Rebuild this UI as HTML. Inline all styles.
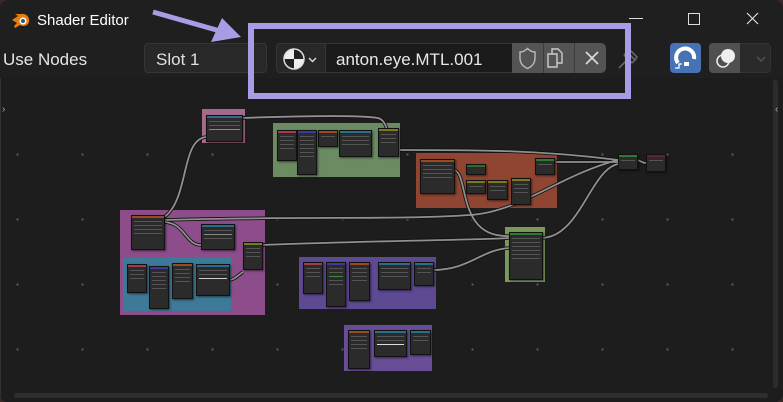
<!DOCTYPE html>
<html><head><meta charset="utf-8"><style>
body{margin:0;width:783px;height:402px;background:#3a2a26;overflow:hidden;font-family:"Liberation Sans",sans-serif}
#win{position:absolute;left:0;top:0;width:783px;height:402px;background:#1f1f1f;border-radius:8px;overflow:hidden}
.a{position:absolute}
.fr{position:absolute}
.n{position:absolute;background:#2b2b2b;border:1px solid #111;box-shadow:1px 1px 2px #0008}
.n i{display:block;height:2px}
.n b{display:block;margin:3px 2px 0;height:1px;background:#555}
</style></head><body><div id="win">
<div class="a" style="left:0;top:78px;width:783px;height:324px;background:#1d1d1d"></div>
<div class="a" id="grid" style="left:0;top:0;width:783px;height:402px;background-image:radial-gradient(circle,#5a5a5a 1px,transparent 1.3px);background-size:65px 65px;background-position:-15px -8px;clip-path:inset(100px 0 0 0)"></div>

<div class="fr" style="left:202px;top:109px;width:43px;height:34px;background:#a66a8a"></div>
<div class="fr" style="left:273px;top:123px;width:127px;height:54px;background:#6b8b63"></div>
<div class="fr" style="left:416px;top:153px;width:141px;height:55px;background:#8f4532"></div>
<div class="fr" style="left:120px;top:210px;width:145px;height:105px;background:#8c4d8a"></div>
<div class="fr" style="left:123px;top:258px;width:108px;height:53px;background:#3d7a97"></div>
<div class="fr" style="left:299px;top:257px;width:137px;height:52px;background:#5e4a92"></div>
<div class="fr" style="left:505px;top:227px;width:40px;height:55px;background:#7a985c"></div>
<div class="fr" style="left:344px;top:325px;width:88px;height:46px;background:#674e96"></div>

<svg class="a" style="left:0;top:0" width="783" height="402" fill="none">
<g stroke="#111" stroke-width="3.5">
<path d="M241 118 C300 116 360 115 378 118 C392 122 385 150 397 150"/>
<path d="M206 137 C180 140 190 200 163 218"/>
<path d="M163 220 C300 216 400 220 470 215 C520 212 560 175 618 160"/>
<path d="M163 222 C185 222 185 245 201 245"/>
<path d="M261 245 C400 240 480 240 509 238"/>
<path d="M228 280 C235 280 238 275 243 272"/>
<path d="M400 150 C480 150 540 150 618 160"/>
<path d="M556 162 C590 162 600 162 618 162"/>
<path d="M541 238 C580 238 590 170 618 164"/>
<path d="M432 270 C470 270 480 250 509 248"/>
<path d="M453 170 C470 170 455 238 509 236"/>
<path d="M636 160 C640 160 642 163 646 163"/>
</g>
<g stroke="#909090" stroke-width="1.8">
<path d="M241 118 C300 116 360 115 378 118 C392 122 385 150 397 150"/>
<path d="M206 137 C180 140 190 200 163 218"/>
<path d="M163 220 C300 216 400 220 470 215 C520 212 560 175 618 160"/>
<path d="M163 222 C185 222 185 245 201 245"/>
<path d="M261 245 C400 240 480 240 509 238"/>
<path d="M228 280 C235 280 238 275 243 272"/>
<path d="M400 150 C480 150 540 150 618 160"/>
<path d="M556 162 C590 162 600 162 618 162"/>
<path d="M541 238 C580 238 590 170 618 164"/>
<path d="M432 270 C470 270 480 250 509 248"/>
<path d="M453 170 C470 170 455 238 509 236"/>
<path d="M636 160 C640 160 642 163 646 163"/>
</g>
</svg>

<div class="n" style="left:206px;top:115px;width:35px;height:25px"><i style="background:#2a6c8c"></i><b></b><b></b><b style="background:#888"></b></div>
<div class="n" style="left:277px;top:130px;width:18px;height:29px"><i style="background:#a33a50"></i><b></b><b></b><b></b><b></b></div>
<div class="n" style="left:297px;top:130px;width:18px;height:43px"><i style="background:#3c3a9a"></i><b></b><b></b><b></b><b></b><b></b><b></b></div>
<div class="n" style="left:318px;top:130px;width:18px;height:15px"><i style="background:#9a4a20"></i><b></b></div>
<div class="n" style="left:339px;top:130px;width:31px;height:25px"><i style="background:#2a6c8c"></i><b></b><b></b><b></b></div>
<div class="n" style="left:378px;top:128px;width:19px;height:27px"><i style="background:#7a7a1a"></i><b></b><b></b><b></b></div>
<div class="n" style="left:420px;top:159px;width:33px;height:33px"><i style="background:#9a4a20"></i><b></b><b></b><b></b><b></b></div>
<div class="n" style="left:466px;top:164px;width:18px;height:9px"><i style="background:#2f6a2f"></i></div>
<div class="n" style="left:466px;top:180px;width:18px;height:12px"><i style="background:#7a7a1a"></i><b></b></div>
<div class="n" style="left:487px;top:180px;width:19px;height:18px"><i style="background:#7a7a1a"></i><b></b><b></b></div>
<div class="n" style="left:511px;top:178px;width:18px;height:25px"><i style="background:#7a7a1a"></i><b></b><b></b><b></b></div>
<div class="n" style="left:535px;top:158px;width:18px;height:15px"><i style="background:#2f7a2f"></i><b></b></div>
<div class="n" style="left:618px;top:154px;width:18px;height:14px"><i style="background:#2f7a2f"></i><b></b></div>
<div class="n" style="left:646px;top:154px;width:18px;height:16px"><i style="background:#6a2030"></i><b></b></div>
<div class="n" style="left:509px;top:232px;width:32px;height:46px"><i style="background:#2f7a2f"></i><b></b><b></b><b></b><b></b><b></b><b></b></div>
<div class="n" style="left:131px;top:215px;width:32px;height:33px"><i style="background:#9a4a20"></i><b></b><b></b><b></b><b></b></div>
<div class="n" style="left:201px;top:224px;width:32px;height:24px"><i style="background:#2a6c8c"></i><b></b><b style="background:#888"></b><b></b></div>
<div class="n" style="left:243px;top:242px;width:18px;height:26px"><i style="background:#7a7a1a"></i><b></b><b></b><b></b></div>
<div class="n" style="left:127px;top:264px;width:18px;height:27px"><i style="background:#a33a50"></i><b></b><b></b><b></b></div>
<div class="n" style="left:149px;top:266px;width:18px;height:41px"><i style="background:#3c3a9a"></i><b></b><b></b><b></b><b></b><b></b></div>
<div class="n" style="left:172px;top:263px;width:19px;height:34px"><i style="background:#9a4a20"></i><b></b><b></b><b></b><b></b></div>
<div class="n" style="left:196px;top:264px;width:32px;height:30px"><i style="background:#2a6c8c"></i><b></b><b></b><b style="background:#ccc"></b></div>
<div class="n" style="left:303px;top:262px;width:18px;height:30px"><i style="background:#a33a50"></i><b></b><b></b><b></b></div>
<div class="n" style="left:326px;top:262px;width:18px;height:43px"><i style="background:#3c3a9a"></i><b></b><b></b><b style="background:#3a8a3a"></b><b></b><b></b></div>
<div class="n" style="left:349px;top:262px;width:19px;height:37px"><i style="background:#9a4a20"></i><b></b><b></b><b></b><b></b></div>
<div class="n" style="left:378px;top:262px;width:31px;height:26px"><i style="background:#2a6c8c"></i><b></b><b></b><b></b></div>
<div class="n" style="left:414px;top:262px;width:18px;height:22px"><i style="background:#2a6c8c"></i><b></b><b></b></div>
<div class="n" style="left:348px;top:330px;width:20px;height:37px"><i style="background:#9a4a20"></i><b></b><b></b><b></b><b></b></div>
<div class="n" style="left:374px;top:330px;width:31px;height:25px"><i style="background:#2a6c8c"></i><b></b><b></b><b style="background:#ddd"></b></div>
<div class="n" style="left:410px;top:330px;width:19px;height:23px"><i style="background:#2a6c8c"></i><b></b><b></b></div>

<div class="a" style="left:14px;top:393px;width:754px;height:5px;background:#2e2e2e;border-radius:3px"></div>
<div class="a" style="left:773px;top:80px;width:5px;height:308px;background:#2c2c2c;border-radius:3px"></div>
<div class="a" style="left:0;top:78px;width:1px;height:324px;background:#333"></div>
<div class="a" style="left:2px;top:104px;color:#aaa;font-size:10px">›</div>
<div class="a" style="left:775px;top:104px;color:#aaa;font-size:10px">‹</div>

<svg class="a" style="left:10px;top:11px" width="22" height="18"><path d="M2 9 L8 5 L5 3 L11 3 C16 2 20 6 19 11 C18 15 13 16 10 14 L5 17 L4 15 L7 12 Z" fill="#e87d0d"/><circle cx="13" cy="10" r="3.5" fill="#fff"/><circle cx="13" cy="10" r="2" fill="#265787"/></svg>
<div class="a" style="left:37px;top:12px;color:#fff;font-size:15px">Shader Editor</div>
<div class="a" style="left:629px;top:18px;width:14px;height:1px;background:#ddd"></div>
<div class="a" style="left:688px;top:13px;width:10px;height:10px;border:1px solid #ddd"></div>
<svg class="a" style="left:746px;top:12px" width="13" height="13"><path d="M1 1L12 12M12 1L1 12" stroke="#ddd" stroke-width="1.2"/></svg>

<div class="a" style="left:3px;top:50px;color:#e6e6e6;font-size:17px">Use Nodes</div>
<div class="a" style="left:144px;top:43px;width:123px;height:30px;background:#282828;border:1px solid #363636;border-radius:4px;box-sizing:border-box"></div>
<div class="a" style="left:156px;top:50px;color:#e0e0e0;font-size:17px">Slot 1</div>
<div class="a" style="left:276px;top:43px;width:50px;height:30px;background:#282828;border:1px solid #363636;border-radius:4px 0 0 4px;box-sizing:border-box"></div>
<svg class="a" style="left:282px;top:46px" width="44" height="26"><circle cx="12" cy="13" r="10" fill="#eee"/><path d="M12 3 A10 10 0 0 1 22 13 L12 13Z" fill="#222"/><path d="M12 13 L2 13 A10 10 0 0 0 12 23Z" fill="#222"/><circle cx="12" cy="13" r="10" fill="none" stroke="#ddd" stroke-width="1.5"/><path d="M27 12l3.5 3.5 3.5-3.5" stroke="#ddd" fill="none" stroke-width="1.4"/></svg>
<div class="a" style="left:325px;top:43px;width:188px;height:30px;background:#1b1b1b;border:1px solid #363636;box-sizing:border-box"></div>
<div class="a" style="left:336px;top:50px;color:#e8e8e8;font-size:17px">anton.eye.MTL.001</div>
<div class="a" style="left:512px;top:43px;width:94px;height:30px;background:#545454;border-radius:0 5px 5px 0"></div>
<div class="a" style="left:543px;top:43px;width:1px;height:30px;background:#3d3d3d"></div>
<div class="a" style="left:574px;top:43px;width:1px;height:30px;background:#3d3d3d"></div>
<svg class="a" style="left:512px;top:43px" width="94" height="30"><path d="M8 9 C12 9 14 7 15.5 5.5 C17 7 19 9 23 9 L23 15 C23 21 19 24 15.5 25.5 C12 24 8 21 8 15Z" fill="none" stroke="#bbb" stroke-width="1.4"/><path d="M36 11 h9 v13 h-9z M40 11 v-5 h6 l4 4 v10 h-5" fill="none" stroke="#ccc" stroke-width="1.4"/><path d="M74 9L86 21M86 9L74 21" stroke="#ddd" stroke-width="1.6"/></svg>
<svg class="a" style="left:615px;top:46px" width="26" height="26"><path d="M4 22 L11 15 M9 9 L17 17 M12 6 L20 14 L22 11 L15 4Z M9 9 L12 6 M17 17 L20 14" stroke="#666" fill="none" stroke-width="1.6"/></svg>
<div class="a" style="left:670px;top:43px;width:31px;height:30px;background:#4772b3;border-radius:4px"></div>
<svg class="a" style="left:670px;top:43px" width="31" height="30"><path d="M8 20 A9 9 0 1 1 24 16" stroke="#fff" stroke-width="4" fill="none"/><path d="M5 25 h4 v-4 h3" stroke="#fff" stroke-width="1.3" fill="none"/><rect x="14" y="19" width="5" height="4" fill="#fff"/></svg>
<div class="a" style="left:709px;top:43px;width:62px;height:30px;background:#2a2a2a;border:1px solid #333;border-radius:4px;box-sizing:border-box"></div>
<div class="a" style="left:709px;top:43px;width:31px;height:30px;background:#505050;border-radius:4px 0 0 4px"></div>
<svg class="a" style="left:709px;top:43px" width="62" height="30"><circle cx="19" cy="13" r="7" fill="#eee"/><circle cx="14" cy="18" r="6" fill="none" stroke="#eee" stroke-width="1.5"/><path d="M48 14l4 4 4-4" stroke="#555" fill="none" stroke-width="1.3"/></svg>

<div class="a" style="left:248px;top:23px;width:383px;height:76px;border:6px solid #a89de4;box-sizing:border-box"></div>
<svg class="a" style="left:0;top:0" width="260" height="50"><path d="M153 12 L220 31" stroke="#a89de4" stroke-width="5"/><path d="M241 37 L211 42 L222 18Z" fill="#a89de4"/></svg>
</div></body></html>
